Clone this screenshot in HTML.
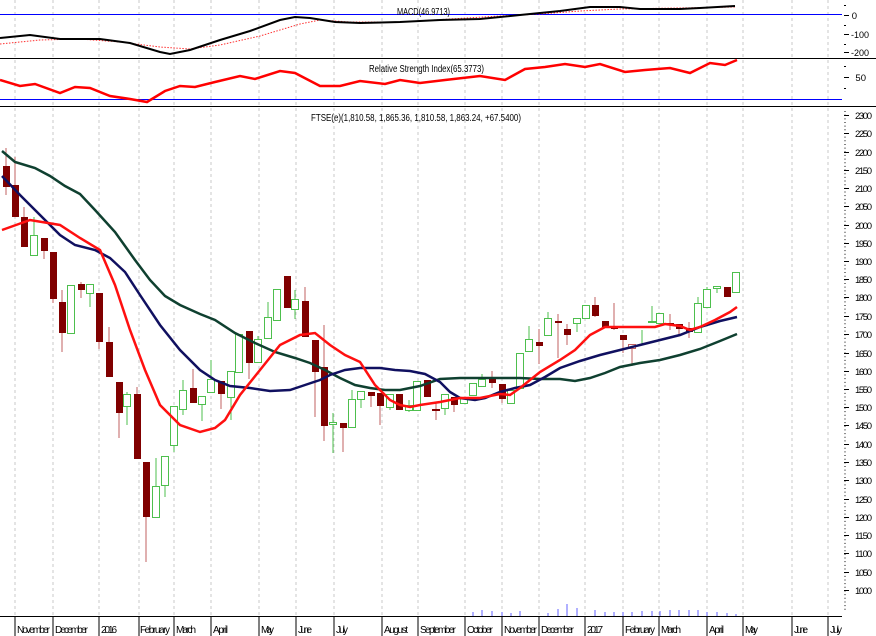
<!DOCTYPE html>
<html><head><meta charset="utf-8"><style>
html,body{margin:0;padding:0;background:#fff;}
svg{display:block;font-family:"Liberation Sans",sans-serif;}
</style></head><body>
<svg width="876" height="636" viewBox="0 0 876 636" xmlns="http://www.w3.org/2000/svg">
<rect width="876" height="636" fill="#fff"/>
<g stroke="#c8c8c8" stroke-dasharray="3,3" stroke-width="1">
<line x1="15" y1="0" x2="15" y2="616"/><line x1="53" y1="0" x2="53" y2="616"/><line x1="99" y1="0" x2="99" y2="616"/><line x1="139" y1="0" x2="139" y2="616"/><line x1="174" y1="0" x2="174" y2="616"/><line x1="211" y1="0" x2="211" y2="616"/><line x1="259" y1="0" x2="259" y2="616"/><line x1="296" y1="0" x2="296" y2="616"/><line x1="334" y1="0" x2="334" y2="616"/><line x1="382" y1="0" x2="382" y2="616"/><line x1="418" y1="0" x2="418" y2="616"/><line x1="465" y1="0" x2="465" y2="616"/><line x1="502" y1="0" x2="502" y2="616"/><line x1="539" y1="0" x2="539" y2="616"/><line x1="585" y1="0" x2="585" y2="616"/><line x1="623" y1="0" x2="623" y2="616"/><line x1="659" y1="0" x2="659" y2="616"/><line x1="707" y1="0" x2="707" y2="616"/><line x1="743" y1="0" x2="743" y2="616"/><line x1="792" y1="0" x2="792" y2="616"/><line x1="828" y1="0" x2="828" y2="616"/>
</g>
<line x1="0" y1="14.5" x2="842" y2="14.5" stroke="#0000ff"/>
<line x1="0" y1="58.5" x2="876" y2="58.5" stroke="#000"/>
<line x1="0" y1="99.5" x2="842" y2="99.5" stroke="#0000ff"/>
<line x1="0" y1="106.5" x2="876" y2="106.5" stroke="#000"/>
<line x1="0" y1="616.5" x2="842" y2="616.5" stroke="#000"/>
<g stroke="#000">
<line x1="844" y1="5.5" x2="846" y2="5.5"/><line x1="844" y1="15.5" x2="849" y2="15.5"/><line x1="844" y1="25.5" x2="846" y2="25.5"/><line x1="844" y1="34.5" x2="849" y2="34.5"/><line x1="844" y1="44.5" x2="846" y2="44.5"/><line x1="844" y1="52.5" x2="849" y2="52.5"/>
<line x1="844" y1="66.5" x2="846" y2="66.5"/><line x1="844" y1="77.5" x2="849" y2="77.5"/><line x1="844" y1="88.5" x2="846" y2="88.5"/>
</g>
<g stroke="#000" stroke-dasharray="1,2.66"><line x1="845" y1="111" x2="845" y2="612"/></g>
<g stroke="#000"><line x1="844" y1="115.5" x2="849" y2="115.5"/><line x1="844" y1="133.5" x2="849" y2="133.5"/><line x1="844" y1="152.5" x2="849" y2="152.5"/><line x1="844" y1="170.5" x2="849" y2="170.5"/><line x1="844" y1="188.5" x2="849" y2="188.5"/><line x1="844" y1="206.5" x2="849" y2="206.5"/><line x1="844" y1="225.5" x2="849" y2="225.5"/><line x1="844" y1="243.5" x2="849" y2="243.5"/><line x1="844" y1="261.5" x2="849" y2="261.5"/><line x1="844" y1="279.5" x2="849" y2="279.5"/><line x1="844" y1="297.5" x2="849" y2="297.5"/><line x1="844" y1="316.5" x2="849" y2="316.5"/><line x1="844" y1="334.5" x2="849" y2="334.5"/><line x1="844" y1="353.5" x2="849" y2="353.5"/><line x1="844" y1="371.5" x2="849" y2="371.5"/><line x1="844" y1="389.5" x2="849" y2="389.5"/><line x1="844" y1="407.5" x2="849" y2="407.5"/><line x1="844" y1="425.5" x2="849" y2="425.5"/><line x1="844" y1="444.5" x2="849" y2="444.5"/><line x1="844" y1="462.5" x2="849" y2="462.5"/><line x1="844" y1="480.5" x2="849" y2="480.5"/><line x1="844" y1="499.5" x2="849" y2="499.5"/><line x1="844" y1="517.5" x2="849" y2="517.5"/><line x1="844" y1="535.5" x2="849" y2="535.5"/><line x1="844" y1="553.5" x2="849" y2="553.5"/><line x1="844" y1="572.5" x2="849" y2="572.5"/><line x1="844" y1="590.5" x2="849" y2="590.5"/></g>
<polyline fill="none" stroke="#ff3030" stroke-width="1" stroke-dasharray="1.5,1.5" points="0,44 40,40 80,39 120,42 160,47 190,49 220,45 260,36 300,24 320,20 350,22 400,22 450,19 500,16 540,14 580,11 620,9 680,8 735,7"/>
<polyline fill="none" stroke="#000" stroke-width="2" points="0,38 30,35 60,39 100,39 130,43 160,52 170,54 190,50 220,40 250,31 280,20 295,17 310,18 335,22 360,23 400,22 440,20 480,19 520,15 560,11 590,7 620,7 640,9 680,9 700,8 735,6"/>
<g font-size="10" fill="#000">
<text x="397" y="15" textLength="53" lengthAdjust="spacingAndGlyphs">MACD(46.9713)</text>
<text x="369" y="72" textLength="115" lengthAdjust="spacingAndGlyphs">Relative Strength Index(65.3773)</text>
<text x="311" y="121" textLength="210" lengthAdjust="spacingAndGlyphs">FTSE(e)(1,810.58, 1,865.36, 1,810.58, 1,863.24, +67.5400)</text>
</g>
<polyline fill="none" stroke="#ff0000" stroke-width="2.5" points="0,80 20,86 35,84 60,93 75,87 90,88 110,96 130,99 147,102 165,91 180,86 195,87 215,82 240,76 255,79 280,71 295,73 320,86 340,86 360,81 385,84 400,80 420,83 445,80 480,76 505,80 525,69 545,67 565,64 585,67 600,64 625,72 645,70 670,68 690,73 710,63 725,65 737,60"/>
<g font-size="9.5" fill="#000" text-anchor="end">
<text x="857" y="19">0</text><text x="869" y="38" textLength="18" lengthAdjust="spacingAndGlyphs">-100</text><text x="869" y="56" textLength="18" lengthAdjust="spacingAndGlyphs">-200</text><text x="866" y="81">50</text>
</g>
<g font-size="9.5" fill="#000" lengthAdjust="spacingAndGlyphs">
<text x="855" y="119" textLength="17">2300</text><text x="855" y="137" textLength="17">2250</text><text x="855" y="156" textLength="17">2200</text><text x="855" y="174" textLength="17">2150</text><text x="855" y="192" textLength="17">2100</text><text x="855" y="210" textLength="17">2050</text><text x="855" y="229" textLength="17">2000</text><text x="855" y="247" textLength="17">1950</text><text x="855" y="265" textLength="17">1900</text><text x="855" y="283" textLength="17">1850</text><text x="855" y="301" textLength="17">1800</text><text x="855" y="320" textLength="17">1750</text><text x="855" y="338" textLength="17">1700</text><text x="855" y="357" textLength="17">1650</text><text x="855" y="375" textLength="17">1600</text><text x="855" y="393" textLength="17">1550</text><text x="855" y="411" textLength="17">1500</text><text x="855" y="429" textLength="17">1450</text><text x="855" y="448" textLength="17">1400</text><text x="855" y="466" textLength="17">1350</text><text x="855" y="484" textLength="17">1300</text><text x="855" y="503" textLength="17">1250</text><text x="855" y="521" textLength="17">1200</text><text x="855" y="539" textLength="17">1150</text><text x="855" y="557" textLength="17">1100</text><text x="855" y="576" textLength="17">1050</text><text x="855" y="594" textLength="17">1000</text>
</g>
<g stroke-width="1">
<line x1="6" y1="148" x2="6" y2="195" stroke="#c06060"/><rect x="3" y="166" width="7" height="21" fill="#800000"/>
<line x1="15" y1="157" x2="15" y2="217" stroke="#c06060"/><rect x="12" y="185" width="7" height="32" fill="#800000"/>
<line x1="24" y1="207" x2="24" y2="247" stroke="#c06060"/><rect x="21" y="217" width="7" height="30" fill="#800000"/>
<line x1="34" y1="217" x2="34" y2="255" stroke="#4dbf4d"/><rect x="30.5" y="235.5" width="7" height="20" fill="#fff" stroke="#4dbf4d"/>
<line x1="44" y1="238" x2="44" y2="259" stroke="#c06060"/><rect x="41" y="238" width="7" height="13" fill="#800000"/>
<line x1="53" y1="252" x2="53" y2="303" stroke="#c06060"/><rect x="50" y="252" width="7" height="47" fill="#800000"/>
<line x1="62" y1="290" x2="62" y2="352" stroke="#c06060"/><rect x="59" y="302" width="7" height="31" fill="#800000"/>
<rect x="67.5" y="285.5" width="7" height="48" fill="#fff" stroke="#4dbf4d"/>
<line x1="81" y1="282" x2="81" y2="298" stroke="#c06060"/><rect x="78" y="284" width="7" height="6" fill="#800000"/>
<line x1="90" y1="284" x2="90" y2="307" stroke="#4dbf4d"/><rect x="86.5" y="284.5" width="7" height="9" fill="#fff" stroke="#4dbf4d"/>
<line x1="99" y1="293" x2="99" y2="349" stroke="#c06060"/><rect x="96" y="293" width="7" height="49" fill="#800000"/>
<line x1="109" y1="327" x2="109" y2="377" stroke="#c06060"/><rect x="106" y="342" width="7" height="35" fill="#800000"/>
<line x1="119" y1="382" x2="119" y2="438" stroke="#c06060"/><rect x="116" y="382" width="7" height="31" fill="#800000"/>
<line x1="127" y1="392" x2="127" y2="425" stroke="#4dbf4d"/><rect x="123.5" y="394.5" width="7" height="12" fill="#fff" stroke="#4dbf4d"/>
<line x1="137" y1="387" x2="137" y2="459" stroke="#c06060"/><rect x="134" y="394" width="7" height="65" fill="#800000"/>
<line x1="146" y1="462" x2="146" y2="562" stroke="#c06060"/><rect x="143" y="462" width="7" height="55" fill="#800000"/>
<line x1="156" y1="458" x2="156" y2="517" stroke="#4dbf4d"/><rect x="152.5" y="486.5" width="7" height="31" fill="#fff" stroke="#4dbf4d"/>
<line x1="165" y1="456" x2="165" y2="497" stroke="#4dbf4d"/><rect x="161.5" y="456.5" width="7" height="29" fill="#fff" stroke="#4dbf4d"/>
<line x1="174" y1="406" x2="174" y2="452" stroke="#4dbf4d"/><rect x="170.5" y="406.5" width="7" height="39" fill="#fff" stroke="#4dbf4d"/>
<line x1="183" y1="380" x2="183" y2="415" stroke="#4dbf4d"/><rect x="179.5" y="390.5" width="7" height="19" fill="#fff" stroke="#4dbf4d"/>
<line x1="193" y1="369" x2="193" y2="403" stroke="#c06060"/><rect x="190" y="388" width="7" height="15" fill="#800000"/>
<line x1="202" y1="396" x2="202" y2="421" stroke="#4dbf4d"/><rect x="198.5" y="396.5" width="7" height="8" fill="#fff" stroke="#4dbf4d"/>
<line x1="211" y1="360" x2="211" y2="392" stroke="#4dbf4d"/><rect x="207.5" y="379.5" width="7" height="13" fill="#fff" stroke="#4dbf4d"/>
<line x1="221" y1="381" x2="221" y2="409" stroke="#c06060"/><rect x="218" y="381" width="7" height="13" fill="#800000"/>
<line x1="231" y1="371" x2="231" y2="420" stroke="#4dbf4d"/><rect x="227.5" y="371.5" width="7" height="26" fill="#fff" stroke="#4dbf4d"/>
<rect x="235.5" y="334.5" width="7" height="38" fill="#fff" stroke="#4dbf4d"/>
<line x1="249" y1="331" x2="249" y2="379" stroke="#c06060"/><rect x="246" y="331" width="7" height="32" fill="#800000"/>
<line x1="258" y1="336" x2="258" y2="362" stroke="#4dbf4d"/><rect x="254.5" y="339.5" width="7" height="23" fill="#fff" stroke="#4dbf4d"/>
<line x1="268" y1="302" x2="268" y2="338" stroke="#4dbf4d"/><rect x="264.5" y="317.5" width="7" height="21" fill="#fff" stroke="#4dbf4d"/>
<rect x="273.5" y="289.5" width="7" height="31" fill="#fff" stroke="#4dbf4d"/>
<rect x="284" y="276" width="7" height="32" fill="#800000"/>
<line x1="295" y1="290" x2="295" y2="319" stroke="#4dbf4d"/><rect x="291.5" y="299.5" width="7" height="10" fill="#fff" stroke="#4dbf4d"/>
<line x1="305" y1="287" x2="305" y2="337" stroke="#c06060"/><rect x="302" y="301" width="7" height="36" fill="#800000"/>
<line x1="315" y1="340" x2="315" y2="417" stroke="#c06060"/><rect x="312" y="340" width="7" height="32" fill="#800000"/>
<line x1="324" y1="325" x2="324" y2="441" stroke="#c06060"/><rect x="321" y="367" width="7" height="59" fill="#800000"/>
<line x1="333" y1="413" x2="333" y2="453" stroke="#4dbf4d"/><rect x="329.5" y="422.5" width="7" height="2" fill="#fff" stroke="#4dbf4d"/>
<line x1="343" y1="423" x2="343" y2="452" stroke="#c06060"/><rect x="340" y="423" width="7" height="5" fill="#800000"/>
<line x1="352" y1="390" x2="352" y2="427" stroke="#4dbf4d"/><rect x="348.5" y="399.5" width="7" height="28" fill="#fff" stroke="#4dbf4d"/>
<line x1="361" y1="391" x2="361" y2="408" stroke="#4dbf4d"/><rect x="357.5" y="391.5" width="7" height="8" fill="#fff" stroke="#4dbf4d"/>
<line x1="371" y1="392" x2="371" y2="407" stroke="#c06060"/><rect x="368" y="392" width="7" height="4" fill="#800000"/>
<line x1="380" y1="393" x2="380" y2="425" stroke="#c06060"/><rect x="377" y="393" width="7" height="13" fill="#800000"/>
<line x1="390" y1="394" x2="390" y2="410" stroke="#4dbf4d"/><rect x="386.5" y="394.5" width="7" height="13" fill="#fff" stroke="#4dbf4d"/>
<rect x="396" y="394" width="7" height="16" fill="#800000"/>
<line x1="409" y1="400" x2="409" y2="412" stroke="#4dbf4d"/><rect x="405.5" y="405.5" width="7" height="5" fill="#fff" stroke="#4dbf4d"/>
<rect x="413.5" y="381.5" width="7" height="29" fill="#fff" stroke="#4dbf4d"/>
<rect x="424" y="380" width="7" height="17" fill="#800000"/>
<line x1="436" y1="402" x2="436" y2="420" stroke="#c06060"/><rect x="432" y="409" width="8" height="2" fill="#800000"/>
<line x1="445" y1="394" x2="445" y2="415" stroke="#4dbf4d"/><rect x="441.5" y="394.5" width="7" height="14" fill="#fff" stroke="#4dbf4d"/>
<line x1="454" y1="397" x2="454" y2="412" stroke="#c06060"/><rect x="451" y="397" width="7" height="8" fill="#800000"/>
<rect x="460.5" y="398.5" width="7" height="5" fill="#fff" stroke="#4dbf4d"/>
<rect x="469.5" y="383.5" width="7" height="12" fill="#fff" stroke="#4dbf4d"/>
<line x1="482" y1="374" x2="482" y2="386" stroke="#4dbf4d"/><rect x="478.5" y="379.5" width="7" height="7" fill="#fff" stroke="#4dbf4d"/>
<line x1="492" y1="371" x2="492" y2="388" stroke="#c06060"/><rect x="489" y="378" width="7" height="5" fill="#800000"/>
<line x1="502" y1="384" x2="502" y2="403" stroke="#c06060"/><rect x="499" y="384" width="7" height="15" fill="#800000"/>
<rect x="507.5" y="390.5" width="7" height="13" fill="#fff" stroke="#4dbf4d"/>
<rect x="516.5" y="353.5" width="7" height="35" fill="#fff" stroke="#4dbf4d"/>
<line x1="529" y1="326" x2="529" y2="351" stroke="#4dbf4d"/><rect x="525.5" y="339.5" width="7" height="12" fill="#fff" stroke="#4dbf4d"/>
<line x1="539" y1="329" x2="539" y2="364" stroke="#c06060"/><rect x="536" y="342" width="7" height="4" fill="#800000"/>
<line x1="548" y1="312" x2="548" y2="335" stroke="#4dbf4d"/><rect x="544.5" y="318.5" width="7" height="17" fill="#fff" stroke="#4dbf4d"/>
<line x1="558" y1="314" x2="558" y2="358" stroke="#c06060"/><rect x="555" y="321" width="7" height="2" fill="#800000"/>
<line x1="567" y1="324" x2="567" y2="345" stroke="#c06060"/><rect x="564" y="329" width="7" height="6" fill="#800000"/>
<line x1="577" y1="318" x2="577" y2="332" stroke="#4dbf4d"/><rect x="573.5" y="318.5" width="7" height="5" fill="#fff" stroke="#4dbf4d"/>
<rect x="582.5" y="305.5" width="7" height="13" fill="#fff" stroke="#4dbf4d"/>
<line x1="595" y1="297" x2="595" y2="317" stroke="#c06060"/><rect x="592" y="305" width="7" height="11" fill="#800000"/>
<rect x="602" y="321" width="7" height="6" fill="#800000"/>
<line x1="614" y1="303" x2="614" y2="330" stroke="#c06060"/><rect x="611" y="327" width="7" height="2" fill="#800000"/>
<line x1="623" y1="335" x2="623" y2="353" stroke="#c06060"/><rect x="620" y="335" width="7" height="5" fill="#800000"/>
<line x1="632" y1="344" x2="632" y2="366" stroke="#c06060"/><rect x="628.5" y="344.5" width="7" height="4" fill="#fff" stroke="#c06060"/>
<line x1="642" y1="330" x2="642" y2="345" stroke="#4dbf4d"/>
<line x1="652" y1="306" x2="652" y2="323" stroke="#4dbf4d"/><rect x="648.5" y="321.5" width="7" height="1" fill="#fff" stroke="#4dbf4d"/>
<rect x="656.5" y="313.5" width="7" height="10" fill="#fff" stroke="#4dbf4d"/>
<line x1="670" y1="314" x2="670" y2="330" stroke="#c06060"/><rect x="667" y="323" width="7" height="2" fill="#800000"/>
<line x1="679" y1="324" x2="679" y2="335" stroke="#c06060"/><rect x="676" y="324" width="7" height="5" fill="#800000"/>
<line x1="689" y1="322" x2="689" y2="338" stroke="#c06060"/><rect x="686" y="328" width="7" height="4" fill="#800000"/>
<line x1="698" y1="297" x2="698" y2="332" stroke="#4dbf4d"/><rect x="694.5" y="303.5" width="7" height="29" fill="#fff" stroke="#4dbf4d"/>
<line x1="707" y1="287" x2="707" y2="307" stroke="#4dbf4d"/><rect x="703.5" y="289.5" width="7" height="18" fill="#fff" stroke="#4dbf4d"/>
<line x1="717" y1="286" x2="717" y2="293" stroke="#4dbf4d"/><rect x="713.5" y="286.5" width="7" height="2" fill="#fff" stroke="#4dbf4d"/>
<rect x="724" y="287" width="7" height="10" fill="#800000"/>
<rect x="732.5" y="272.5" width="7" height="20" fill="#fff" stroke="#4dbf4d"/>
</g>
<polyline fill="none" stroke="#0f4030" stroke-width="2.5" points="2,151 15,162 35,168 50,176 65,186 80,194 95,210 115,232 135,260 150,280 165,296 180,305 200,314 215,320 235,333 255,343 275,352 295,358 310,363 325,370 340,378 355,385 370,388 385,390 400,390 410,388 420,386 440,379 460,378 480,378 500,378 520,378 540,379 560,379 575,381 590,378 605,373 620,367 640,363 660,360 680,355 700,349 720,341 737,334"/>
<polyline fill="none" stroke="#101060" stroke-width="2.5" points="2,176 20,195 40,215 60,235 75,245 95,250 110,258 125,272 140,295 160,325 180,350 200,370 215,380 230,386 250,388 270,391 290,390 305,385 320,380 330,375 345,370 360,368 380,368 395,370 410,371 425,374 440,382 450,392 460,398 475,400 485,398 500,392 515,388 530,385 545,377 560,368 580,361 600,355 620,350 640,345 660,340 680,335 700,327 720,321 737,317"/>
<polyline fill="none" stroke="#ff1010" stroke-width="2.5" points="2,230 30,220 60,225 80,238 100,250 115,285 130,330 145,370 160,405 180,425 200,432 215,428 225,420 240,395 260,370 280,345 300,335 315,333 330,345 345,355 360,362 375,385 390,400 400,405 410,407 420,405 440,402 460,398 480,398 500,394 510,395 520,388 540,372 560,360 575,350 590,335 605,327 620,327 640,327 655,327 665,324 680,326 690,330 700,327 715,320 730,312 737,307"/>
<g stroke="#6060ff" stroke-width="1">
<line x1="473" y1="616" x2="473" y2="612"/><line x1="482" y1="616" x2="482" y2="610"/><line x1="492" y1="616" x2="492" y2="611"/><line x1="502" y1="616" x2="502" y2="612"/><line x1="511" y1="616" x2="511" y2="613"/><line x1="520" y1="616" x2="520" y2="611"/><line x1="548" y1="616" x2="548" y2="613"/><line x1="558" y1="616" x2="558" y2="609"/><line x1="567" y1="616" x2="567" y2="604"/><line x1="577" y1="616" x2="577" y2="608"/><line x1="595" y1="616" x2="595" y2="610"/><line x1="605" y1="616" x2="605" y2="612"/><line x1="614" y1="616" x2="614" y2="612"/><line x1="623" y1="616" x2="623" y2="612"/><line x1="632" y1="616" x2="632" y2="612"/><line x1="642" y1="616" x2="642" y2="611"/><line x1="652" y1="616" x2="652" y2="611"/><line x1="660" y1="616" x2="660" y2="611"/><line x1="670" y1="616" x2="670" y2="610"/><line x1="679" y1="616" x2="679" y2="610"/><line x1="689" y1="616" x2="689" y2="610"/><line x1="698" y1="616" x2="698" y2="610"/><line x1="707" y1="616" x2="707" y2="612"/><line x1="717" y1="616" x2="717" y2="612"/><line x1="727" y1="616" x2="727" y2="613"/><line x1="736" y1="616" x2="736" y2="614"/>
</g>
<g stroke="#000"><line x1="15" y1="617" x2="15" y2="636"/><line x1="53" y1="617" x2="53" y2="636"/><line x1="99" y1="617" x2="99" y2="636"/><line x1="139" y1="617" x2="139" y2="636"/><line x1="174" y1="617" x2="174" y2="636"/><line x1="211" y1="617" x2="211" y2="636"/><line x1="259" y1="617" x2="259" y2="636"/><line x1="296" y1="617" x2="296" y2="636"/><line x1="334" y1="617" x2="334" y2="636"/><line x1="382" y1="617" x2="382" y2="636"/><line x1="418" y1="617" x2="418" y2="636"/><line x1="465" y1="617" x2="465" y2="636"/><line x1="502" y1="617" x2="502" y2="636"/><line x1="539" y1="617" x2="539" y2="636"/><line x1="585" y1="617" x2="585" y2="636"/><line x1="623" y1="617" x2="623" y2="636"/><line x1="659" y1="617" x2="659" y2="636"/><line x1="707" y1="617" x2="707" y2="636"/><line x1="743" y1="617" x2="743" y2="636"/><line x1="792" y1="617" x2="792" y2="636"/><line x1="828" y1="617" x2="828" y2="636"/></g>
<g font-size="10" fill="#000" lengthAdjust="spacingAndGlyphs">
<text x="17" y="633" textLength="33">November</text><text x="55" y="633" textLength="33">December</text><text x="101" y="633" textLength="16">2016</text><text x="140" y="633" textLength="30">February</text><text x="176" y="633" textLength="20">March</text><text x="213" y="633" textLength="15">April</text><text x="261" y="633" textLength="13">May</text><text x="298" y="633" textLength="14">June</text><text x="336" y="633" textLength="12">July</text><text x="384" y="633" textLength="24">August</text><text x="420" y="633" textLength="36">September</text><text x="467" y="633" textLength="26">October</text><text x="504" y="633" textLength="33">November</text><text x="541" y="633" textLength="33">December</text><text x="587" y="633" textLength="16">2017</text><text x="625" y="633" textLength="30">February</text><text x="661" y="633" textLength="20">March</text><text x="709" y="633" textLength="15">April</text><text x="745" y="633" textLength="13">May</text><text x="794" y="633" textLength="14">June</text><text x="830" y="633" textLength="12">July</text>
</g>
</svg>
</body></html>
